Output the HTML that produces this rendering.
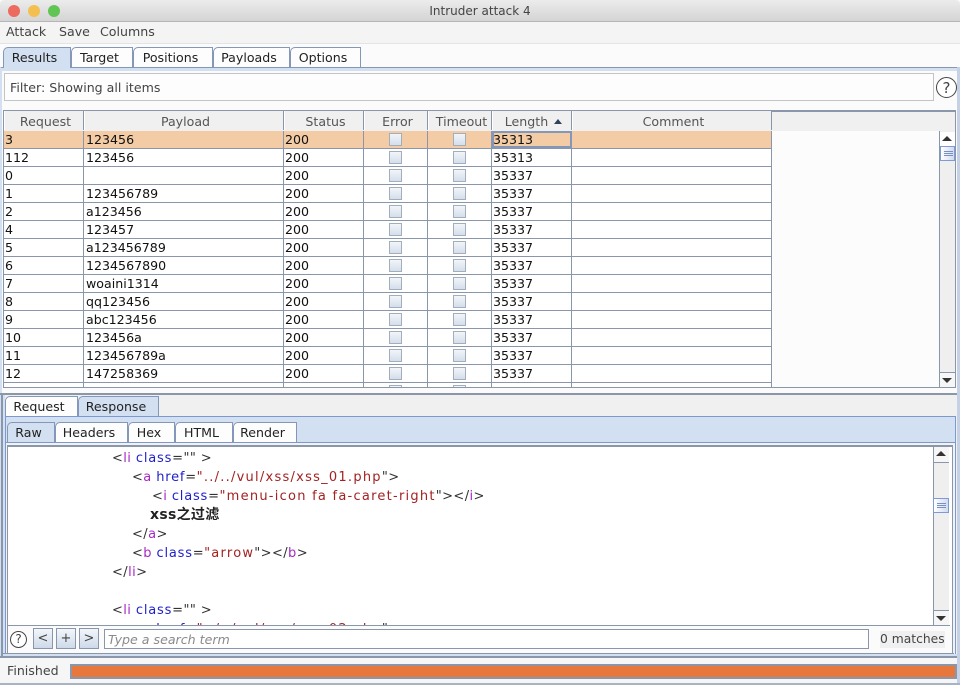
<!DOCTYPE html>
<html><head><meta charset="utf-8"><style>
html,body{margin:0;padding:0}
body{width:960px;height:685px;position:relative;overflow:hidden;background:#fbfbfb;font:12.6px/18px "DejaVu Sans","Noto Sans CJK SC",sans-serif;color:#222}
div,span.a{position:absolute;box-sizing:border-box}
.tab{background:#fdfdfd;border:1px solid #8497b8;border-radius:5px 0 0 0;text-align:center;color:#222;height:21px;line-height:20px;white-space:nowrap;padding-right:5px}
.tab.on{background:#d3e0f1;border-bottom:none;height:22px}
.hd{top:111px;height:19px;background:#f0f0f0;text-align:center;color:#555;line-height:21px;border-right:1px solid #8a97ab;border-left:1px solid #fff;padding-left:3px;white-space:nowrap}
.row{left:4px;width:768px;height:18px;background:#fff;border-bottom:1px solid #8a97ab}
.row.sel{background:#f3cca5}
.row div{top:0;height:17px;line-height:17px;white-space:nowrap;color:#111}
.c1{left:0;width:80px;padding-left:1px;border-right:1px solid #8a97ab}
.c2{left:80px;width:200px;padding-left:2px;border-right:1px solid #8a97ab}
.c3{left:280px;width:80px;padding-left:1px;border-right:1px solid #8a97ab}
.c4{left:360px;width:64px;border-right:1px solid #8a97ab}
.c5{left:424px;width:64px;border-right:1px solid #8a97ab}
.c6{left:488px;width:80px;padding-left:1px;border-right:1px solid #8a97ab}
.c7{left:568px;width:200px;border-right:1px solid #8a97ab}
.row i{position:absolute;box-sizing:border-box;top:2px;left:25px;width:13px;height:13px;background:linear-gradient(#f2f5f9,#d4deeb);border:1px solid #a3aebd}
.ln{left:112px;white-space:pre;height:19px;line-height:19px;font-size:13px;color:#333;letter-spacing:.4px}
b.t{font-weight:normal;color:#a52ac4}b.k{font-weight:normal;color:#1f1fc8;letter-spacing:.8px}b.s{font-weight:normal;color:#a32222;letter-spacing:1.25px}
.btn{top:628px;width:20px;height:21px;background:linear-gradient(#f3f6fa,#cddaea);border:1px solid #8a97ab;text-align:center;line-height:19px;font-size:13px;color:#444}
.sb{background:#efefef;border-left:1px solid #8a97ab}
.arrow{width:0;height:0;border-left:5px solid transparent;border-right:5px solid transparent}
.grip{background:linear-gradient(90deg,#fff,#cfdcf0);border:1px solid #7f9ad6;left:0}
.grip i{position:absolute;left:3px;width:9px;height:1px;background:#7b8fc0}
</style></head><body>
<div style="left:0;top:0;width:960px;height:22px;background:linear-gradient(#ececec,#d4d4d4);border-bottom:1px solid #b5b5b5;text-align:center;color:#444;font-size:12px;line-height:23px;border-radius:4px 4px 0 0;padding-right:0">Intruder attack 4</div>
<div style="left:8px;top:5px;width:12px;height:12px;border-radius:50%;background:#ec6a5e"></div>
<div style="left:28px;top:5px;width:12px;height:12px;border-radius:50%;background:#f4bf4f"></div>
<div style="left:48px;top:5px;width:12px;height:12px;border-radius:50%;background:#61c554"></div>
<div style="left:0;top:22px;width:960px;height:22px;background:#f4f4f4;border-bottom:1px solid #e4e4e4"></div>
<div style="left:6px;top:23px;color:#444">Attack</div><div style="left:59px;top:23px;color:#444">Save</div><div style="left:100px;top:23px;color:#444">Columns</div>

<div style="left:0;top:67px;width:960px;height:326px;background:#fbfbfb;border-top:1px solid #8a97ab;border-left:2px solid #d3e0f1;border-right:3px solid #d3e0f1"></div>
<div style="left:1px;top:68px;width:958px;height:3px;background:#d3e0f1"></div>
<div class="tab on" style="left:3px;top:47px;width:68px;height:21px">Results</div>
<div class="tab" style="left:71px;top:47px;width:62px">Target</div>
<div class="tab" style="left:133px;top:47px;width:80px">Positions</div>
<div class="tab" style="left:213px;top:47px;width:77px">Payloads</div>
<div class="tab" style="left:290px;top:47px;width:71px">Options</div>

<div style="left:4px;top:73px;width:930px;height:28px;background:#fdfdfd;border:1px solid #c4c4c4;padding-left:5px;line-height:27px;color:#444">Filter: Showing all items</div>
<div style="left:936px;top:77px;width:21px;height:21px;border:1px solid #444;border-radius:50%;background:#fff;text-align:center;line-height:20px;font-size:15px;color:#444">?</div>

<div style="left:3px;top:110px;width:953px;height:278px;background:#fcfcfc;border:1px solid #8a97ab;border-width:2px 1px 1px 1px"></div>
<div style="left:4px;top:112px;width:951px;height:19px;background:#f0f0f0"></div>
<div class="hd" style="left:4px;width:80px">Request</div>
<div class="hd" style="left:84px;width:200px">Payload</div>
<div class="hd" style="left:284px;width:80px">Status</div>
<div class="hd" style="left:364px;width:64px">Error</div>
<div class="hd" style="left:428px;width:64px">Timeout</div>
<div class="hd" style="left:492px;width:80px">Length <span style="display:inline-block;width:0;height:0;border:4.5px solid transparent;border-top:0;border-bottom:5px solid #2d4160;vertical-align:2px;margin-left:2px"></span></div>
<div class="hd" style="left:572px;width:200px">Comment</div>

<div style="left:4px;top:131px;width:768px;height:256px;overflow:hidden">
<div class="row sel" style="left:0;top:0"><div class="c1">3</div><div class="c2">123456</div><div class="c3">200</div><div class="c4"><i></i></div><div class="c5"><i></i></div><div class="c6" style="outline:2px solid #8497b8;outline-offset:-2px">35313</div><div class="c7"></div></div>
<div class="row" style="left:0;top:18px"><div class="c1">112</div><div class="c2">123456</div><div class="c3">200</div><div class="c4"><i></i></div><div class="c5"><i></i></div><div class="c6">35313</div><div class="c7"></div></div>
<div class="row" style="left:0;top:36px"><div class="c1">0</div><div class="c2"></div><div class="c3">200</div><div class="c4"><i></i></div><div class="c5"><i></i></div><div class="c6">35337</div><div class="c7"></div></div>
<div class="row" style="left:0;top:54px"><div class="c1">1</div><div class="c2">123456789</div><div class="c3">200</div><div class="c4"><i></i></div><div class="c5"><i></i></div><div class="c6">35337</div><div class="c7"></div></div>
<div class="row" style="left:0;top:72px"><div class="c1">2</div><div class="c2">a123456</div><div class="c3">200</div><div class="c4"><i></i></div><div class="c5"><i></i></div><div class="c6">35337</div><div class="c7"></div></div>
<div class="row" style="left:0;top:90px"><div class="c1">4</div><div class="c2">123457</div><div class="c3">200</div><div class="c4"><i></i></div><div class="c5"><i></i></div><div class="c6">35337</div><div class="c7"></div></div>
<div class="row" style="left:0;top:108px"><div class="c1">5</div><div class="c2">a123456789</div><div class="c3">200</div><div class="c4"><i></i></div><div class="c5"><i></i></div><div class="c6">35337</div><div class="c7"></div></div>
<div class="row" style="left:0;top:126px"><div class="c1">6</div><div class="c2">1234567890</div><div class="c3">200</div><div class="c4"><i></i></div><div class="c5"><i></i></div><div class="c6">35337</div><div class="c7"></div></div>
<div class="row" style="left:0;top:144px"><div class="c1">7</div><div class="c2">woaini1314</div><div class="c3">200</div><div class="c4"><i></i></div><div class="c5"><i></i></div><div class="c6">35337</div><div class="c7"></div></div>
<div class="row" style="left:0;top:162px"><div class="c1">8</div><div class="c2">qq123456</div><div class="c3">200</div><div class="c4"><i></i></div><div class="c5"><i></i></div><div class="c6">35337</div><div class="c7"></div></div>
<div class="row" style="left:0;top:180px"><div class="c1">9</div><div class="c2">abc123456</div><div class="c3">200</div><div class="c4"><i></i></div><div class="c5"><i></i></div><div class="c6">35337</div><div class="c7"></div></div>
<div class="row" style="left:0;top:198px"><div class="c1">10</div><div class="c2">123456a</div><div class="c3">200</div><div class="c4"><i></i></div><div class="c5"><i></i></div><div class="c6">35337</div><div class="c7"></div></div>
<div class="row" style="left:0;top:216px"><div class="c1">11</div><div class="c2">123456789a</div><div class="c3">200</div><div class="c4"><i></i></div><div class="c5"><i></i></div><div class="c6">35337</div><div class="c7"></div></div>
<div class="row" style="left:0;top:234px"><div class="c1">12</div><div class="c2">147258369</div><div class="c3">200</div><div class="c4"><i></i></div><div class="c5"><i></i></div><div class="c6">35337</div><div class="c7"></div></div>
<div class="row" style="left:0;top:252px"><div class="c1"></div><div class="c2"></div><div class="c3">200</div><div class="c4"><i></i></div><div class="c5"><i></i></div><div class="c6">35337</div><div class="c7"></div></div>
</div>

<div class="sb" style="left:939px;top:131px;width:16px;height:256px"></div>
<div style="left:940px;top:132px;width:15px;height:15px;background:#fff;border-bottom:1px solid #bbb"><div class="arrow" style="left:2px;top:4px;border-bottom:5px solid #333"></div></div>
<div class="grip" style="left:940px;top:146px;width:15px;height:15px"><i style="top:4px"></i><i style="top:6px"></i><i style="top:8px"></i></div>
<div style="left:940px;top:372px;width:15px;height:15px;background:#f6f6f6;border-top:1px solid #8a97ab"><div class="arrow" style="left:2px;top:5px;border-top:5px solid #333"></div></div>

<div style="left:0;top:393px;width:957px;height:2px;background:#8a97ab"></div>
<div style="left:1px;top:395px;width:956px;height:261px;background:#f0f0f0"></div>
<div style="left:0;top:395px;width:5px;height:262px;background:#d3e0f1"></div>
<div style="left:1px;top:393px;width:2px;height:264px;background:#8a97ab"></div>
<div style="left:957px;top:67px;width:3px;height:618px;background:#c5d1e6"></div>

<div class="tab" style="left:5px;top:396px;width:73px">Request</div>
<div class="tab on" style="left:78px;top:396px;width:81px;height:21px">Response</div>
<div style="left:5px;top:416px;width:951px;height:240px;background:#d3e0f1;border:1px solid #7d97cf;border-bottom:0"></div>
<div class="tab on" style="left:7px;top:422px;width:48px;height:21px">Raw</div>
<div class="tab" style="left:55px;top:422px;width:73px">Headers</div>
<div class="tab" style="left:128px;top:422px;width:47px">Hex</div>
<div class="tab" style="left:175px;top:422px;width:58px">HTML</div>
<div class="tab" style="left:233px;top:422px;width:64px">Render</div>

<div style="left:6px;top:442px;width:949px;height:214px;background:#f2f2f2;border-top:1px solid #7d97cf"></div>
<div style="left:7px;top:445px;width:946px;height:208px;border:1px solid #8a97ab;background:#fff;border-width:2px 1px 1px 1px"></div>
<div style="left:8px;top:447px;width:942px;height:178px;background:#fff;overflow:hidden">
<div class="ln" style="top:2px;left:104px">&lt;<b class="t">li</b> <b class="k">class</b>=&quot;&quot; &gt;</div>
<div class="ln" style="top:21px;left:124px">&lt;<b class="t">a</b> <b class="k">href</b>=<b class="s">&quot;../../vul/xss/xss_01.php</b>&quot;&gt;</div>
<div class="ln" style="top:40px;left:144px">&lt;<b class="t">i</b> <b class="k">class</b>=<b class="s">&quot;menu-icon fa fa-caret-right</b>&quot;&gt;&lt;/<b class="t">i</b>&gt;</div>
<div class="ln" style="top:58px;left:142px;font-weight:bold;color:#222;font-size:14px;letter-spacing:.3px;line-height:20px">xss之过滤</div>
<div class="ln" style="top:78px;left:124px">&lt;/<b class="t">a</b>&gt;</div>
<div class="ln" style="top:97px;left:124px">&lt;<b class="t">b</b> <b class="k">class</b>=<b class="s">&quot;arrow</b>&quot;&gt;&lt;/<b class="t">b</b>&gt;</div>
<div class="ln" style="top:116px;left:104px">&lt;/<b class="t">li</b>&gt;</div>
<div class="ln" style="top:154px;left:104px">&lt;<b class="t">li</b> <b class="k">class</b>=&quot;&quot; &gt;</div>
<div class="ln" style="top:173px;left:124px">&lt;<b class="t">a</b> <b class="k">href</b>=<b class="s">&quot;../../vul/xss/xss_02.php</b>&quot;&gt;</div>
</div>
<div style="left:8px;top:625px;width:942px;height:1px;background:#8a97ab"></div>

<div class="sb" style="left:933px;top:447px;width:16px;height:178px"></div>
<div style="left:934px;top:447px;width:15px;height:16px;background:#f6f6f6;border-bottom:1px solid #8a97ab"><div class="arrow" style="left:2px;top:4px;border-bottom:5px solid #333"></div></div>
<div class="grip" style="left:933px;top:498px;width:16px;height:15px"><i style="top:4px"></i><i style="top:6px"></i><i style="top:8px"></i></div>
<div style="left:934px;top:610px;width:15px;height:15px;background:#f6f6f6;border-top:1px solid #8a97ab"><div class="arrow" style="left:2px;top:5px;border-top:5px solid #333"></div></div>

<div style="left:8px;top:626px;width:944px;height:27px;background:#fbfbfb"></div>
<div style="left:10px;top:631px;width:17px;height:17px;border:1px solid #444;border-radius:50%;background:#fff;text-align:center;line-height:15px;font-size:12px;color:#444">?</div>
<div class="btn" style="left:33px">&lt;</div>
<div class="btn" style="left:56px">+</div>
<div class="btn" style="left:79px">&gt;</div>
<div style="left:104px;top:629px;width:765px;height:20px;background:#fff;border:1px solid #8a97ab;padding-left:3px;line-height:19px;font-style:italic;color:#8a8a8a">Type a search term</div>
<div style="left:880px;top:631px;width:65px;height:17px;background:#f0f0f0;line-height:17px;color:#444;white-space:nowrap;overflow:hidden;font-size:12.3px">0 matches</div>

<div style="left:3px;top:653px;width:951px;height:1px;background:#8a97ab"></div>
<div style="left:3px;top:654px;width:954px;height:2px;background:#d3e0f1"></div>
<div style="left:0;top:656px;width:957px;height:2px;background:#8a97ab"></div>
<div style="left:0;top:658px;width:957px;height:25px;background:#f6f6f6"></div>
<div style="left:7px;top:662px;color:#444">Finished</div>
<div style="left:70px;top:664px;width:887px;height:15px;background:#e8773e;border:2px solid #8a97ab"></div>
<div style="left:0;top:683px;width:960px;height:2px;background:#a8b3c4"></div>
</body></html>
